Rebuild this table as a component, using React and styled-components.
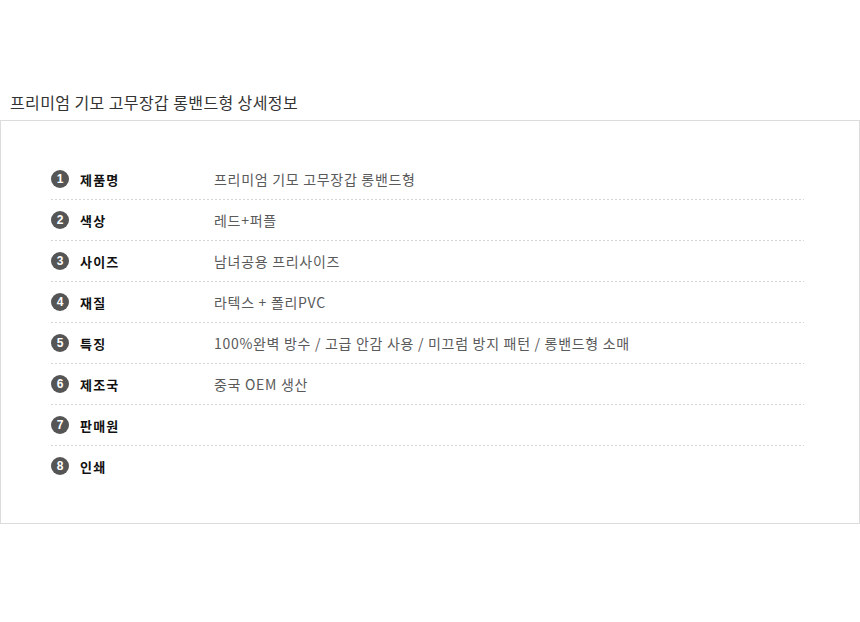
import React from 'react';
import styled, { createGlobalStyle } from 'styled-components';

const GlobalStyle = createGlobalStyle`
  body {
    margin: 0;
    background: #fff;
    font-family: "Noto Sans CJK KR", "Noto Sans", sans-serif;
  }
`;

const Page = styled.div`
  width: 860px;
  padding-top: 88px;
`;

const Title = styled.h2`
  margin: 0;
  padding: 0 0 0 10px;
  height: 32px;

  font-size: 16px;
  font-weight: 400;
  line-height: 28px;
  color: #333;
  letter-spacing: 0.4px;
`;

const InfoBox = styled.div`
  box-sizing: border-box;
  width: 860px;

  padding: 38px 55px 37px 50px;

  border: 1px solid #dcdcdc;
`;

const InfoList = styled.ul`
  list-style: none;
  margin: 0;
  padding: 0;
`;

const InfoRow = styled.li`
  display: flex;
  align-items: center;
  height: 40px;

  background-image: ${(props) =>
    props.last
      ? 'none'
      : 'linear-gradient(to right, #d4d4d4 2px, transparent 2px)'};
  background-size: 4px 1px;
  background-repeat: repeat-x;
  background-position: left bottom;
  padding-bottom: ${(props) => (props.last ? '0' : '1px')};
`;

const Badge = styled.span`
  display: inline-flex;
  align-items: center;
  justify-content: center;
  flex: none;

  width: 18px;
  height: 18px;
  margin-right: 11px;

  border-radius: 50%;
  background: #555;

  color: #fff;
  font-family: "Liberation Sans", Arial, sans-serif;
  font-size: 12px;
  font-weight: 700;
`;

const Label = styled.span`
  width: 134px;
  flex: none;

  font-size: 13px;
  font-weight: 700;
  color: #111;
  letter-spacing: 1.2px;
`;

const Value = styled.span`
  font-size: 14px;
  color: #5a5a5a;
  letter-spacing: 0.7px;
`;

const rows = [
  { label: '제품명', value: '프리미엄 기모 고무장갑 롱밴드형' },
  { label: '색상', value: '레드+퍼플' },
  { label: '사이즈', value: '남녀공용 프리사이즈' },
  { label: '재질', value: '라텍스 + 폴리PVC' },
  {
    label: '특징',
    value: '100%완벽 방수 / 고급 안감 사용 / 미끄럼 방지 패턴 / 롱밴드형 소매',
  },
  { label: '제조국', value: '중국 OEM 생산' },
  { label: '판매원', value: '' },
  { label: '인쇄', value: '' },
];

export default function App() {
  return (
    <Page>
      <GlobalStyle />
      <Title>프리미엄 기모 고무장갑 롱밴드형 상세정보</Title>
      <InfoBox>
        <InfoList>
          {rows.map((row, index) => (
            <InfoRow key={index} last={index === rows.length - 1}>
              <Badge>{index + 1}</Badge>
              <Label>{row.label}</Label>
              <Value>{row.value}</Value>
            </InfoRow>
          ))}
        </InfoList>
      </InfoBox>
    </Page>
  );
}
